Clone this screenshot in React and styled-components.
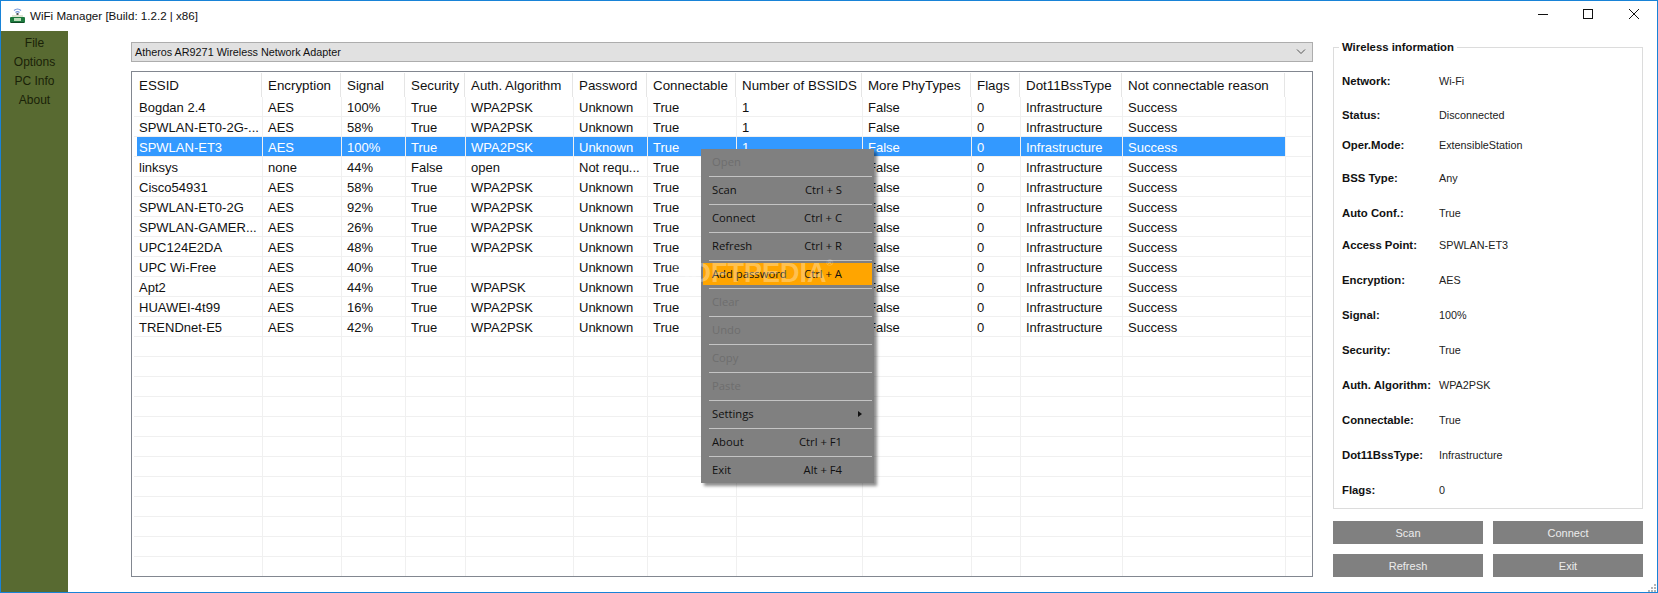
import styled, { createGlobalStyle } from "styled-components";

const GlobalStyle = createGlobalStyle`
  html, body { margin: 0; padding: 0; background: #fff; }
  body { font-family: "Liberation Sans", Arial, sans-serif; color: #111; }
  * { box-sizing: border-box; }
`;

const columns = [
  { title: "ESSID", width: 129 },
  { title: "Encryption", width: 79 },
  { title: "Signal", width: 64 },
  { title: "Security", width: 60 },
  { title: "Auth. Algorithm", width: 108 },
  { title: "Password", width: 74 },
  { title: "Connectable", width: 89 },
  { title: "Number of BSSIDS", width: 126 },
  { title: "More PhyTypes", width: 109 },
  { title: "Flags", width: 49 },
  { title: "Dot11BssType", width: 102 },
  { title: "Not connectable reason", width: 163 },
];

const networks = [
  ["Bogdan 2.4", "AES", "100%", "True", "WPA2PSK", "Unknown"],
  ["SPWLAN-ET0-2G-...", "AES", "58%", "True", "WPA2PSK", "Unknown"],
  ["SPWLAN-ET3", "AES", "100%", "True", "WPA2PSK", "Unknown"],
  ["linksys", "none", "44%", "False", "open", "Not requ..."],
  ["Cisco54931", "AES", "58%", "True", "WPA2PSK", "Unknown"],
  ["SPWLAN-ET0-2G", "AES", "92%", "True", "WPA2PSK", "Unknown"],
  ["SPWLAN-GAMER...", "AES", "26%", "True", "WPA2PSK", "Unknown"],
  ["UPC124E2DA", "AES", "48%", "True", "WPA2PSK", "Unknown"],
  ["UPC Wi-Free", "AES", "40%", "True", "", "Unknown"],
  ["Apt2", "AES", "44%", "True", "WPAPSK", "Unknown"],
  ["HUAWEI-4t99", "AES", "16%", "True", "WPA2PSK", "Unknown"],
  ["TRENDnet-E5", "AES", "42%", "True", "WPA2PSK", "Unknown"],
];

// third value: space above the row
const info = [
  ["Network:", "Wi-Fi", 0],
  ["Status:", "Disconnected", 14],
  ["Oper.Mode:", "ExtensibleStation", 10],
  ["BSS Type:", "Any", 13],
  ["Auto Conf.:", "True", 15],
  ["Access Point:", "SPWLAN-ET3", 12],
  ["Encryption:", "AES", 15],
  ["Signal:", "100%", 15],
  ["Security:", "True", 15],
  ["Auth. Algorithm:", "WPA2PSK", 15],
  ["Connectable:", "True", 15],
  ["Dot11BssType:", "Infrastructure", 15],
  ["Flags:", "0", 15],
];

const menuItems = [
  { label: "Open", off: true },
  { label: "Scan", keys: "Ctrl + S" },
  { label: "Connect", keys: "Ctrl + C" },
  { label: "Refresh", keys: "Ctrl + R" },
  { label: "Add password", keys: "Ctrl + A", active: true },
  { label: "Clear", off: true },
  { label: "Undo", off: true },
  { label: "Copy", off: true },
  { label: "Paste", off: true },
  { label: "Settings", sub: true },
  { label: "About", keys: "Ctrl + F1" },
  { label: "Exit", keys: "Alt + F4" },
];

const blankRows = 12;

function RouterIcon() {
  return (
    <svg width="15" height="17" viewBox="0 0 15 17">
      <path d="M4 3.5 Q7.5 .5 11 3.5" fill="none" stroke="#6f93d9" strokeWidth="1.2" />
      <path d="M5.5 5.5 Q7.5 3.8 9.5 5.5" fill="none" stroke="#6f93d9" strokeWidth="1.2" />
      <rect x="6.5" y="6" width="2" height="2" fill="#555" />
      <rect x="2" y="8" width="11" height="2" fill="#dfe5d3" />
      <rect x="0" y="10" width="15" height="6" rx="1" fill="#1f7a3f" />
      <rect x="4" y="11" width="7" height="3" fill="#b9dcb9" />
      <rect x="1" y="15" width="13" height="1" fill="#0f4a25" />
    </svg>
  );
}

function WindowButtons() {
  return (
    <svg width="102" height="14" viewBox="0 0 102 14" fill="none" stroke="#111" strokeWidth="1">
      <path d="M1 6.5H11" />
      <rect x="46.5" y="1.5" width="9" height="9" />
      <path d="M92 1L102 11M102 1L92 11" />
    </svg>
  );
}

export default function App() {
  return (
    <>
      <GlobalStyle />
      <Window>
        <TitleBar>
          <TitleLeft>
            <RouterIcon />
            <Title>WiFi Manager [Build: 1.2.2 | x86]</Title>
          </TitleLeft>
          <WindowButtons />
        </TitleBar>
        <Body>
          <Sidebar>
            <SideItem>File</SideItem>
            <SideItem>Options</SideItem>
            <SideItem>PC Info</SideItem>
            <SideItem>About</SideItem>
          </Sidebar>
          <Main>
            <Combo>
              <span>Atheros AR9271 Wireless Network Adapter</span>
              <svg width="10" height="6" viewBox="0 0 10 6" fill="none" stroke="#555">
                <path d="M1 .5L5 4.5L9 .5" />
              </svg>
            </Combo>
            <ListBox>
              <HeaderRow>
                {columns.map((c) => (
                  <HeadCell key={c.title} $w={c.width}>
                    {c.title}
                  </HeadCell>
                ))}
              </HeaderRow>
              {networks.map((n, i) => {
                const cells = [...n, "True", i < 3 ? "1" : "", "False", "0", "Infrastructure", "Success"];
                return (
                  <Row key={n[0]}>
                    {columns.map((c, j) => (
                      <Cell key={c.title} $w={c.width} $first={j === 0} $selected={i === 2}>
                        {cells[j]}
                      </Cell>
                    ))}
                  </Row>
                );
              })}
              {Array.from({ length: blankRows }).map((_, i) => (
                <Row key={i}>
                  {columns.map((c) => (
                    <Cell key={c.title} $w={c.width} />
                  ))}
                </Row>
              ))}
            </ListBox>
          </Main>
          <Side>
            <InfoBox>
              <Legend>Wireless information</Legend>
              {info.map(([k, v, gap]) => (
                <InfoRow key={k} $gap={gap}>
                  <InfoKey>{k}</InfoKey>
                  <InfoValue>{v}</InfoValue>
                </InfoRow>
              ))}
            </InfoBox>
            <Buttons>
              <Button>Scan</Button>
              <Button>Connect</Button>
              <Button>Refresh</Button>
              <Button>Exit</Button>
            </Buttons>
          </Side>
        </Body>
        <Menu>
          {menuItems.map((m) => (
            <MenuItem key={m.label} $off={m.off}>
              <MenuInner $active={m.active}>
                <span>{m.label}</span>
                {m.keys && <span>{m.keys}</span>}
                {m.sub && <SubArrow />}
              </MenuInner>
            </MenuItem>
          ))}
        </Menu>
        <Watermark>
          SOFTPEDIA<sup>®</sup>
        </Watermark>
        <Grip width="9" height="9" viewBox="0 0 9 9" fill="#b4b4b4">
          <rect x="7" y="1" width="2" height="2" />
          <rect x="4" y="4" width="2" height="2" />
          <rect x="7" y="4" width="2" height="2" />
          <rect x="1" y="7" width="2" height="2" />
          <rect x="4" y="7" width="2" height="2" />
          <rect x="7" y="7" width="2" height="2" />
        </Grip>
      </Window>
    </>
  );
}

const Window = styled.div`
  position: relative;
  width: 1658px;
  height: 593px;
  border: 1px solid #1883d7;
  background: #fff;
  display: flex;
  flex-direction: column;
  overflow: hidden;
`;

const TitleBar = styled.div`
  height: 30px;
  flex: none;
  display: flex;
  align-items: center;
  justify-content: space-between;
  padding: 0 18px 2px 9px;
`;

const TitleLeft = styled.div`
  display: flex;
  align-items: center;
  gap: 5px;
`;

const Title = styled.span`
  font-size: 11.6px;
  color: #111;
`;

const Body = styled.div`
  flex: 1;
  display: flex;
  min-height: 0;
`;

const Sidebar = styled.div`
  width: 67px;
  flex: none;
  background: #586a31;
  padding-top: 3px;
  display: flex;
  flex-direction: column;
  align-items: center;
`;

const SideItem = styled.div`
  height: 19px;
  line-height: 19px;
  font-size: 12px;
  color: #1a2208;
`;

const Main = styled.div`
  width: 1182px;
  margin-left: 63px;
  flex: none;
  padding-top: 11px;
  display: flex;
  flex-direction: column;
  gap: 9px;
`;

const Combo = styled.div`
  height: 20px;
  flex: none;
  background: #e1e1e1;
  border: 1px solid #adadad;
  display: flex;
  align-items: center;
  justify-content: space-between;
  padding: 0 6px 0 3px;
  font-size: 10.8px;
  color: #111;
`;

const ListBox = styled.div`
  height: 506px;
  flex: none;
  border: 1px solid #828790;
  padding: 1px 1px 0 2px;
  overflow: hidden;
`;

const HeaderRow = styled.div`
  display: flex;
  height: 24px;
  margin-left: -1px;
`;

const HeadCell = styled.div`
  width: ${(p) => p.$w}px;
  flex: none;
  padding-left: 6px;
  line-height: 26px;
  font-size: 13.33px;
  color: #111;
  white-space: nowrap;
  border-right: 1px solid #e5e5e5;
`;

const Row = styled.div`
  display: flex;
  height: 20px;
  border-bottom: 1px solid #f0f0f0;

  &:last-child {
    height: 19px;
    border-bottom: 0;
  }
`;

const Cell = styled.div`
  width: ${(p) => p.$w}px;
  flex: none;
  padding-left: 5px;
  font-size: 13px;
  line-height: 21px;
  white-space: nowrap;
  overflow: hidden;
  color: ${(p) => (p.$selected ? "#fff" : "#111")};
  background: ${(p) =>
    !p.$selected
      ? "transparent"
      : p.$first
      ? "linear-gradient(to right, transparent 3px, #3399ff 3px)"
      : "#3399ff"};
  border-right: 1px solid #f0f0f0;
`;

const Side = styled.div`
  width: 310px;
  margin-left: 20px;
  flex: none;
  padding-top: 11px;
  display: flex;
  flex-direction: column;
`;

const InfoBox = styled.div`
  position: relative;
  height: 462px;
  margin-top: 5px;
  border: 1px solid #dcdcdc;
  padding: 23px 8px 0;
`;

const Legend = styled.div`
  position: absolute;
  left: 5px;
  top: -7px;
  background: #fff;
  padding: 0 3px;
  font-size: 11.33px;
  font-weight: 700;
  color: #111;
`;

const InfoRow = styled.div`
  display: flex;
  height: 20px;
  margin-top: ${(p) => p.$gap}px;
  align-items: center;
`;

const InfoKey = styled.div`
  width: 97px;
  flex: none;
  font-size: 11.33px;
  font-weight: 700;
  color: #111;
`;

const InfoValue = styled.div`
  font-size: 10.8px;
  color: #222;
`;

const Buttons = styled.div`
  display: grid;
  grid-template-columns: 150px 150px;
  grid-auto-rows: 23px;
  gap: 10px;
  margin-top: 12px;
`;

const Button = styled.div`
  background: #808080;
  color: #ececec;
  font-size: 11px;
  display: flex;
  align-items: center;
  justify-content: center;
`;

const Menu = styled.div`
  position: absolute;
  left: 700px;
  top: 148px;
  width: 173px;
  height: 334px;
  background: #808080;
  box-shadow: 3px 3px 3px rgba(0, 0, 0, 0.45);
  padding: 0 2px;
  z-index: 2;
  font-family: "Open Sans", sans-serif;
`;

const MenuItem = styled.div`
  position: relative;
  height: 28px;
  padding: 2px 0 4px;
  color: ${(p) => (p.$off ? "#6e6e6e" : "#111")};

  &:not(:last-child)::after {
    content: "";
    position: absolute;
    left: 6px;
    right: 0;
    bottom: 0;
    height: 1px;
    background: #c4c4c4;
  }
`;

const MenuInner = styled.div`
  height: 22px;
  display: flex;
  align-items: center;
  justify-content: space-between;
  padding: 0 30px 1px 9px;
  font-size: 11.25px;
  position: relative;
  background: ${(p) => (p.$active ? "#ffa500" : "transparent")};
`;

const SubArrow = styled.i`
  position: absolute;
  left: 155px;
  top: 8px;
  border-left: 4px solid #111;
  border-top: 3px solid transparent;
  border-bottom: 3px solid transparent;
`;

const Watermark = styled.div`
  position: absolute;
  left: 671px;
  top: 257px;
  font-size: 27px;
  font-weight: 700;
  color: rgba(255, 255, 255, 0.32);
  z-index: 3;
  pointer-events: none;

  sup {
    font-size: 9px;
    vertical-align: top;
  }
`;

const Grip = styled.svg`
  position: absolute;
  right: 1px;
  bottom: 0;
`;
